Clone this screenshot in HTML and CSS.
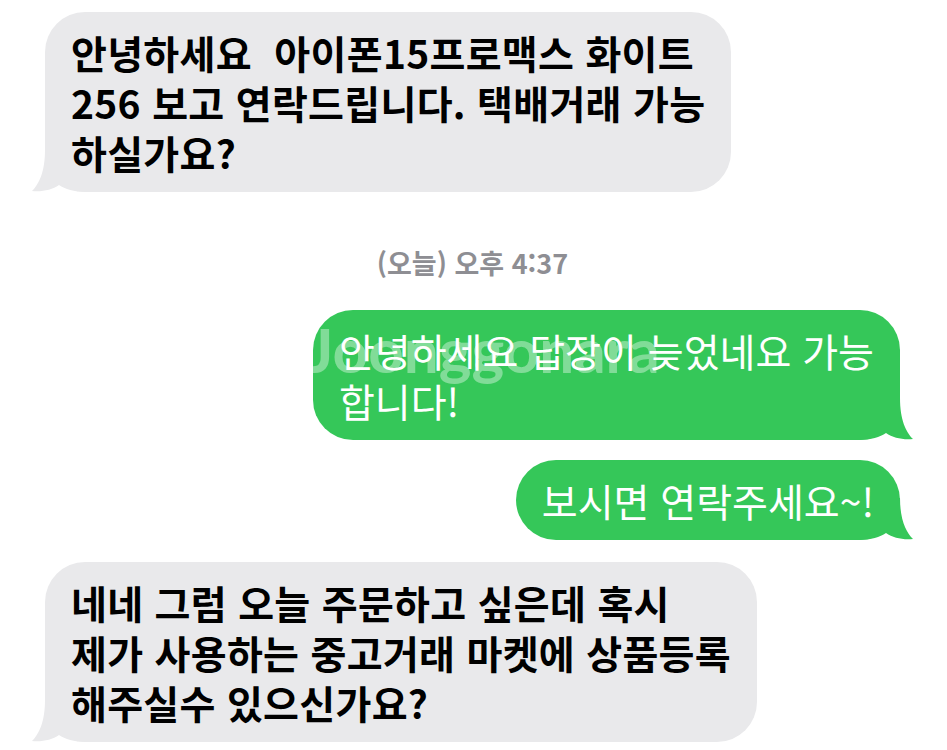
FILE: index.html
```html
<!DOCTYPE html>
<html lang="ko">
<head>
  <meta charset="UTF-8" />
  <meta name="viewport" content="width=device-width, initial-scale=1.0"/>
  <title>메시지</title>
  <link rel="stylesheet" href="styles.css">
</head>
<body>
  <div class="chat">

    <div class="bubble them">
      안녕하세요&nbsp; 아이폰15프로맥스 화이트<br>
      256 보고 연락드립니다. 택배거래 가능<br>
      하실가요?
      <svg class="tail" viewBox="0 0 54 42" width="54" height="42"><path d="M13 0 C13 22 7 34 0 41 C10 42 20 40 27 35 C33 39 42 42 54 42 L54 0 Z"/></svg>
    </div>

    <div class="time">(오늘) 오후 4:37</div>

    <div class="bubble me">
      안녕하세요 답장이 늦었네요 가능<br>
      합니다!
      <span class="watermark">Joonggonara</span>
      <svg class="tail" viewBox="0 0 54 42" width="54" height="42"><path d="M13 0 C13 22 7 34 0 41 C10 42 20 40 27 35 C33 39 42 42 54 42 L54 0 Z"/></svg>
    </div>

    <div class="bubble me">
      보시면 연락주세요~!
      <svg class="tail" viewBox="0 0 54 42" width="54" height="42"><path d="M13 0 C13 22 7 34 0 41 C10 42 20 40 27 35 C33 39 42 42 54 42 L54 0 Z"/></svg>
    </div>

    <div class="bubble them">
      네네 그럼 오늘 주문하고 싶은데 혹시<br>
      제가 사용하는 중고거래 마켓에 상품등록<br>
      해주실수 있으신가요?
      <svg class="tail" viewBox="0 0 54 42" width="54" height="42"><path d="M13 0 C13 22 7 34 0 41 C10 42 20 40 27 35 C33 39 42 42 54 42 L54 0 Z"/></svg>
    </div>

  </div>
</body>
</html>
```

FILE: styles.css
```css
body {
  margin: 0;
  background-color: #ffffff;
  font-family: "Noto Sans CJK KR", "Noto Sans", sans-serif;
}

.chat {
  display: flex;
  flex-direction: column;
  padding: 12px 47px 0 45px;
}

.bubble {
  position: relative;
  isolation: isolate;
  padding: 15px 26px;
  border-radius: 40px;
  font-size: 39px;
  line-height: 50px;
  letter-spacing: 0.3px;
  white-space: nowrap;
}

.them {
  align-self: flex-start;
  background-color: #e9e9eb;
  color: #000;
  font-weight: 700;
  margin-bottom: 20px;
}

.me {
  align-self: flex-end;
  background-color: #35c759;
  color: #fff;
  font-weight: 400;
  letter-spacing: 0;
  margin-bottom: 20px;
}

.me + .me {
  margin-bottom: 22px;
}

.tail {
  position: absolute;
  z-index: -1;
  bottom: 0;
  left: -13px;
  display: block;
}

.them .tail {
  fill: #e9e9eb;
}

.me .tail {
  left: auto;
  right: -13px;
  fill: #35c759;
  transform: scaleX(-1);
}

.time {
  align-self: center;
  margin: 35px 0 31px;
  font-size: 27px;
  line-height: 32px;
  font-weight: 700;
  color: #8e8e93;
}

.watermark {
  position: absolute;
  z-index: -1;
  left: -6px;
  top: 14px;
  font-family: Lato, "Open Sans", sans-serif;
  font-size: 62px;
  font-weight: 700;
  color: rgba(255, 255, 255, 0.38);
  pointer-events: none;
}
```
